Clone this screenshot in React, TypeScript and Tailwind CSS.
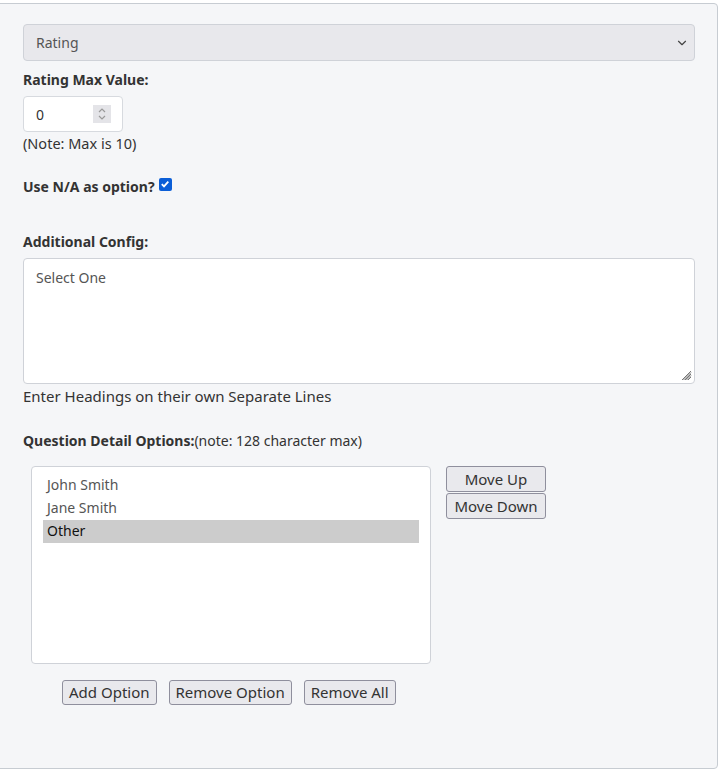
import { ChevronDown } from "lucide-react";

const options = ["John Smith", "Jane Smith", "Other"];

function GrayButton({ children, className = "" }: { children: React.ReactNode; className?: string }) {
  return (
    <button
      type="button"
      className={`rounded-[3px] border border-[#8f8f9d] bg-[#e9e9ed] px-[6px] text-[15px] leading-[23px] text-[#333] ${className}`}
    >
      {children}
    </button>
  );
}

export default function App() {
  return (
    <div className="min-h-[770px] bg-white pt-[3px] text-[#333]" style={{ fontFamily: '"Noto Sans", "Open Sans", sans-serif' }}>
      <div className="-ml-[5px] w-[723px] rounded-tr-[4px] rounded-br-[4px] border border-[#c7ccd2] bg-[#f5f6f8] pl-[27px] pr-[22px] pt-[20px] pb-[63px]">
        {/* type select */}
        <div className="flex h-[37px] items-center justify-between rounded-[4px] border border-[#cfd2d8] bg-[#e8e8ec] pl-[12px] pr-[5px] text-[14px] text-[#555]">
          <span>Rating</span>
          <ChevronDown size={14} strokeWidth={2} className="text-[#444]" />
        </div>

        <div className="mt-[9px] text-[14px] font-bold leading-[20px]">Rating Max Value:</div>
        <div className="mt-[6px] flex h-[36px] w-[100px] items-center justify-between rounded-[4px] border border-[#d7dadf] bg-white pl-[12px] pr-[11px] text-[14px]">
          <span>0</span>
          <div className="flex h-[18px] w-[18px] flex-col items-center justify-center bg-[#e4e4e8] text-[#999]">
            <svg width="10" height="14" viewBox="0 0 10 14" fill="none" stroke="currentColor" strokeWidth="1.2">
              <path d="M2 5 L5 2 L8 5" />
              <path d="M2 9 L5 12 L8 9" />
            </svg>
          </div>
        </div>
        <div className="mt-[1px] text-[14.5px] leading-[20px]">(Note: Max is 10)</div>

        <div className="mt-[24px] flex items-center gap-[4px] text-[14px] font-bold leading-[20px]">
          <span>Use N/A as option?</span>
          <span className="-mt-[6px] flex h-[13px] w-[13px] items-center justify-center rounded-[2px] bg-[#0b5ed7]">
            <svg width="10" height="10" viewBox="0 0 10 10" fill="none" stroke="white" strokeWidth="1.8">
              <path d="M1.8 5.2 L4 7.4 L8.3 2.6" />
            </svg>
          </span>
        </div>

        <div className="mt-[35px] text-[14px] font-bold leading-[20px]">Additional Config:</div>
        <div className="relative mt-[6px] h-[126px] rounded-[4px] border border-[#cfd2d8] bg-white px-[12px] pt-[8px] text-[14px] text-[#555]">
          Select One
          <svg className="absolute bottom-[2px] right-[2px]" width="12" height="12" viewBox="0 0 12 12" stroke="#777" strokeWidth="1">
            <path d="M11 2 L2 11 M11 5 L5 11 M11 8 L8 11 M11 3.5 L3.5 11 M11 6.5 L6.5 11" />
          </svg>
        </div>
        <div className="mt-[1px] text-[15px] leading-[22px]">Enter Headings on their own Separate Lines</div>

        <div className="mt-[24px] text-[14px] leading-[20px]">
          <span className="font-bold">Question Detail Options:</span>(note: 128 character max)
        </div>

        <div className="mt-[15px] flex gap-[15px] pl-[8px]">
          <div className="h-[198px] w-[400px] rounded-[4px] border border-[#cfd2d8] bg-white px-[11px] pt-[7px] text-[14px]">
            {options.map((o) => (
              <div
                key={o}
                className={`h-[23px] pl-[4px] leading-[22px] ${o === "Other" ? "bg-[#cccccc] text-[#111]" : "text-[#555]"}`}
              >
                {o}
              </div>
            ))}
          </div>
          <div className="flex w-[100px] flex-col gap-[1px]">
            <GrayButton className="h-[26px]">Move Up</GrayButton>
            <GrayButton className="h-[26px]">Move Down</GrayButton>
          </div>
        </div>

        <div className="mt-[16px] flex gap-[12px] pl-[39px]">
          <GrayButton className="h-[25px]">Add Option</GrayButton>
          <GrayButton className="h-[25px]">Remove Option</GrayButton>
          <GrayButton className="h-[25px]">Remove All</GrayButton>
        </div>
      </div>
    </div>
  );
}
